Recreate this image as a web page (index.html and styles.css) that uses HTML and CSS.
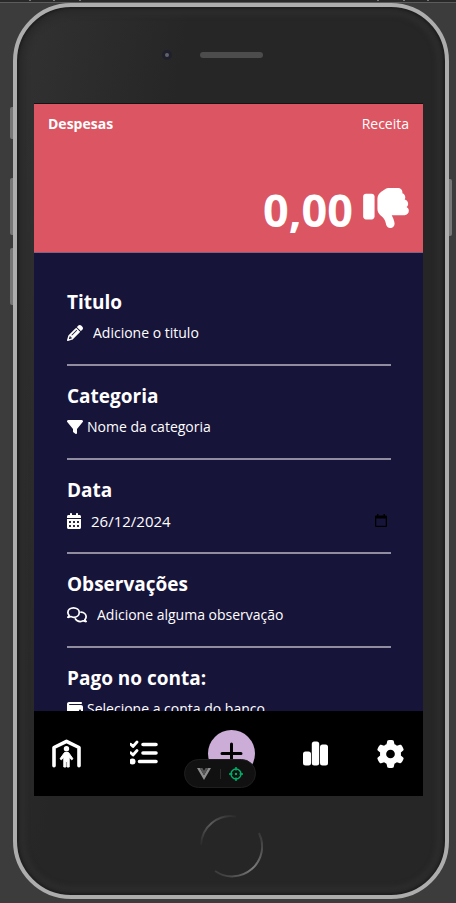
FILE: index.html
```html
<!DOCTYPE html>
<html lang="pt-BR">
<head>
<meta charset="utf-8">
<meta name="viewport" content="width=device-width, initial-scale=1">
<title>Despesas</title>
<link rel="stylesheet" href="styles.css">
</head>
<body>
<div class="stage">
  <svg class="ruler" width="100%" height="3" aria-hidden="true"><path stroke="#777" d="M29 .5h2M53 .5h2M79 .5h2M377 .5h2M403 .5h2M427 .5h2"/></svg>
  <div class="phone">
    <span class="key key-mute"></span>
    <span class="key key-up"></span>
    <span class="key key-down"></span>
    <span class="key key-power"></span>
    <div class="bezel-top">
      <span class="camera"></span>
      <span class="speaker"></span>
    </div>

    <div class="screen">
      <header class="header">
        <div class="tabs">
          <a class="tab tab-active" href="#despesas">Despesas</a>
          <a class="tab" href="#receita">Receita</a>
        </div>
        <div class="amount">
          <span>0,00</span>
          <svg class="thumb" viewBox="0 32 512 448" aria-hidden="true"><path d="M313.4 479.1c26-5.2 42.9-30.5 37.7-56.5l-2.3-11.4c-5.3-26.7-15.1-52.1-28.8-75.2H464c26.5 0 48-21.5 48-48c0-18.5-10.5-34.6-25.9-42.6C497 236.6 504 223.1 504 208c0-23.4-16.8-42.9-38.9-47.1c4.4-7.3 6.9-15.8 6.9-24.9c0-21.3-13.9-39.4-33.1-45.6c.7-3.3 1.1-6.8 1.1-10.4c0-26.5-21.5-48-48-48H294.5c-19 0-37.5 5.6-53.3 16.1L202.7 73.8C176 91.6 160 121.6 160 153.7V192v48 24.9c0 29.2 13.3 56.7 36 75l7.4 5.9c26.5 21.2 44.6 51 51.2 84.2l2.3 11.4c5.2 26 30.5 42.9 56.5 37.7zM32 384H96c17.7 0 32-14.3 32-32V128c0-17.7-14.3-32-32-32H32C14.3 96 0 110.3 0 128V352c0 17.7 14.3 32 32 32z"/></svg>
        </div>
      </header>

      <main class="form">
        <div class="field">
          <label class="label" for="titulo">Titulo</label>
          <div class="row row-wide">
            <svg class="icon" viewBox="0 0 512 512" aria-hidden="true"><path d="M410.3 231l11.3-11.3-33.9-33.9-62.1-62.1L291.7 89.8l-11.3 11.3-22.6 22.6L58.6 322.9c-10.4 10.4-18 23.3-22.2 37.4L1 480.7c-2.5 8.4-.2 17.5 6.1 23.7s15.3 8.5 23.7 6.1l120.3-35.4c14.1-4.2 27-11.8 37.4-22.2L387.7 253.7 410.3 231zM160 399.4l-9.1 22.7c-4 3.1-8.5 5.4-13.3 6.9L59.4 452l23-78.1c1.4-4.9 3.8-9.4 6.9-13.3l22.7-9.1v32c0 8.8 7.2 16 16 16h32zM362.7 18.7L348.3 33.2 325.7 55.8 314.3 67.1l33.9 33.9 62.1 62.1 33.9 33.9 11.3-11.3 22.6-22.6 14.5-14.5c25-25 25-65.5 0-90.5L453.3 18.7c-25-25-65.5-25-90.5 0zm-47.4 168l-144 144c-6.2 6.2-16.4 6.2-22.6 0s-6.2-16.4 0-22.6l144-144c6.2-6.2 16.4-6.2 22.6 0s6.2 16.4 0 22.6z"/></svg>
            <input class="control" id="titulo" type="text" placeholder="Adicione o titulo">
          </div>
        </div>
        <div class="field">
          <label class="label" for="categoria">Categoria</label>
          <div class="row">
            <svg class="icon" viewBox="0 0 512 512" aria-hidden="true"><path d="M3.9 54.9C10.5 40.9 24.5 32 40 32H472c15.5 0 29.5 8.9 36.1 22.9s4.6 30.5-5.2 42.5L320 320.9V448c0 12.1-6.8 23.2-17.7 28.6s-23.8 4.3-33.5-3l-64-48c-8.1-6-12.8-15.5-12.8-25.6V320.9L9 97.3C-.7 85.4-2.8 68.8 3.9 54.9z"/></svg>
            <select class="control" id="categoria"><option>Nome da categoria</option></select>
          </div>
        </div>
        <div class="field">
          <label class="label" for="data">Data</label>
          <div class="row row-wide">
            <svg class="icon icon-narrow" viewBox="0 0 448 512" aria-hidden="true"><path d="M128 0c17.7 0 32 14.3 32 32V64H288V32c0-17.7 14.3-32 32-32s32 14.3 32 32V64h48c26.5 0 48 21.5 48 48v48H0V112C0 85.5 21.5 64 48 64H96V32c0-17.7 14.3-32 32-32zM0 192H448V464c0 26.5-21.5 48-48 48H48c-26.5 0-48-21.5-48-48V192zm64 80v32c0 8.8 7.2 16 16 16h32c8.8 0 16-7.2 16-16V272c0-8.8-7.2-16-16-16H80c-8.8 0-16 7.2-16 16zm128 0v32c0 8.8 7.2 16 16 16h32c8.8 0 16-7.2 16-16V272c0-8.8-7.2-16-16-16H208c-8.8 0-16 7.2-16 16zm144-16c-8.8 0-16 7.2-16 16v32c0 8.8 7.2 16 16 16h32c8.8 0 16-7.2 16-16V272c0-8.8-7.2-16-16-16H336zM64 400v32c0 8.8 7.2 16 16 16h32c8.8 0 16-7.2 16-16V400c0-8.8-7.2-16-16-16H80c-8.8 0-16 7.2-16 16zm144-16c-8.8 0-16 7.2-16 16v32c0 8.8 7.2 16 16 16h32c8.8 0 16-7.2 16-16V400c0-8.8-7.2-16-16-16H208zm112 16v32c0 8.8 7.2 16 16 16h32c8.8 0 16-7.2 16-16V400c0-8.8-7.2-16-16-16H336c-8.8 0-16 7.2-16 16z"/></svg>
            <input class="control control-date" id="data" type="text" inputmode="numeric" value="26/12/2024">
            <button class="picker" type="button" aria-label="Abrir calendário">
              <svg viewBox="0 0 12 14" width="12" height="14" aria-hidden="true"><path fill="#000" fill-rule="evenodd" d="M2 0h1.5v1.5h5V0H10v1.5h1a1 1 0 0 1 1 1V12a1 1 0 0 1-1 1H1a1 1 0 0 1-1-1V2.500a1 1 0 0 1 1-1h1zM1.300 4.500v7.200h9.400V4.500z"/></svg>
            </button>
          </div>
        </div>
        <div class="field">
          <label class="label" for="observacoes">Observações</label>
          <div class="row row-wide">
            <svg class="icon icon-wide" viewBox="0 0 640 512" aria-hidden="true"><path fill="none" stroke="#fff" stroke-width="56" stroke-linejoin="round" stroke-linecap="round" d="M208 28C106 28 28 94 28 176c0 36 15 68 39 94-6 22-20 44-38 58 34 1 66-8 92-22 28 14 58 22 91 22 102 0 180-68 180-152S310 28 208 28zM447 163c96 6 165 72 165 149 0 36-15 68-39 94 6 22 20 44 38 58-34 1-66-8-92-22-28 14-58 22-91 22-72 0-134-34-160-84"/></svg>
            <input class="control" id="observacoes" type="text" placeholder="Adicione alguma observação">
          </div>
        </div>
        <div class="field">
          <label class="label" for="conta">Pago no conta:</label>
          <div class="row">
            <svg class="icon" viewBox="0 0 512 512" aria-hidden="true"><path d="M64 32C28.700 32 0 60.700 0 96V416c0 35.300 28.700 64 64 64H448c35.300 0 64-28.700 64-64V192c0-35.300-28.700-64-64-64H80c-8.800 0-16-7.200-16-16s7.200-16 16-16H448c17.700 0 32-14.300 32-32s-14.300-32-32-32H64zM416 272a32 32 0 1 1 0 64 32 32 0 1 1 0-64z"/></svg>
            <select class="control" id="conta"><option>Selecione a conta do banco</option></select>
          </div>
        </div>
      </main>

      <nav class="nav" aria-label="Principal">
        <a href="#inicio" aria-label="Início">
          <svg width="29" height="29" viewBox="0 0 29 29" aria-hidden="true"><path fill="none" stroke="#fff" stroke-width="3.6" stroke-linecap="round" stroke-linejoin="round" d="M2 26.800V8.500L14.500 2.300 27 8.500v18.300"/><circle cx="14.500" cy="9.700" r="2.700" fill="#fff"/><path fill="#fff" stroke="#fff" stroke-linejoin="round" d="M12.500 13.500h4l4.500 6.300-1.500 1-2.300-2.700V28h-2.100v-5.500h-1.200V28h-2.100v-9.900l-2.300 2.700-1.500-1z"/></svg>
        </a>
        <a href="#lista" aria-label="Lista">
          <svg width="29" height="29" viewBox="1 1 29 29" aria-hidden="true"><path fill="none" stroke="#fff" stroke-width="3.600" stroke-linecap="round" d="M14 6.500H27M14 15H27M10.500 23.500H27"/><path fill="none" stroke="#fff" stroke-width="2.800" stroke-linecap="round" stroke-linejoin="round" d="M1.700 6.300 4 8.500 8 4M1.700 14.800 4 17l4-4.500"/><circle cx="3.500" cy="23.500" r="3" fill="#fff"/></svg>
        </a>
        <a class="add" href="#adicionar" aria-label="Adicionar">
          <svg width="23" height="23" viewBox="0 0 23 23" aria-hidden="true"><path stroke="#000" stroke-width="3" stroke-linecap="round" d="M11.500 2v19M2 11.500h19"/></svg>
        </a>
        <a href="#graficos" aria-label="Gráficos">
          <svg width="25" height="25" viewBox="0 0 25 25" aria-hidden="true"><rect y="10.500" width="8" height="14" rx="2.500"/><rect x="8.800" y=".5" width="7.400" height="24" rx="2.500"/><rect x="17" y="3.500" width="8" height="21" rx="2.500"/></svg>
        </a>
        <a href="#ajustes" aria-label="Ajustes">
          <svg width="27" height="28" viewBox="8 0 496 512" aria-hidden="true"><path d="M495.9 166.6c3.2 8.7 .5 18.4-6.4 24.6l-43.3 39.4c1.100 8.300 1.700 16.800 1.700 25.400s-.6 17.100-1.700 25.400l43.300 39.400c6.900 6.200 9.600 15.900 6.400 24.600c-4.400 11.900-9.700 23.300-15.800 34.300l-4.700 8.100c-6.600 11-14 21.400-22.100 31.200c-5.900 7.200-15.700 9.600-24.500 6.800l-55.700-17.700c-13.400 10.300-28.200 18.900-44 25.400l-12.500 57.100c-2 9.100-9 16.300-18.200 17.800c-13.800 2.300-28 3.500-42.500 3.500s-28.700-1.200-42.500-3.500c-9.200-1.500-16.200-8.700-18.200-17.800l-12.500-57.100c-15.800-6.500-30.600-15.100-44-25.400L83.100 425.900c-8.800 2.800-18.600 .3-24.500-6.800c-8.100-9.800-15.500-20.200-22.100-31.200l-4.700-8.100c-6.100-11-11.400-22.400-15.800-34.300c-3.200-8.700-.5-18.400 6.400-24.600l43.300-39.400C64.600 273.100 64 264.600 64 256s.6-17.100 1.700-25.400L22.400 191.200c-6.900-6.200-9.600-15.900-6.400-24.600c4.400-11.900 9.700-23.300 15.800-34.300l4.700-8.100c6.600-11 14-21.400 22.100-31.200c5.900-7.200 15.700-9.600 24.500-6.800l55.700 17.700c13.400-10.300 28.200-18.900 44-25.400l12.500-57.100c2-9.100 9-16.300 18.200-17.800C227.300 1.200 241.500 0 256 0s28.700 1.200 42.500 3.500c9.200 1.500 16.200 8.700 18.200 17.800l12.500 57.100c15.800 6.500 30.600 15.100 44 25.400l55.700-17.700c8.800-2.800 18.600-.3 24.500 6.800c8.100 9.800 15.500 20.200 22.100 31.200l4.700 8.100c6.100 11 11.400 22.400 15.800 34.300zM256 336a80 80 0 1 0 0-160 80 80 0 1 0 0 160z"/></svg>
        </a>
      </nav>

      <div class="devtools">
        <button type="button" aria-label="Vue DevTools"><svg width="14" height="12" viewBox="0 0 14 12" aria-hidden="true"><path fill="#8c8c8c" d="M0 0h2.800L7 7.200 11.200 0H14L7 12z"/><path fill="#555" d="M2.800 0h2.600L7 2.800 8.600 0h2.600L7 7.200z"/></svg></button>
        <span class="divider"></span>
        <button type="button" aria-label="Inspecionar componente"><svg width="14" height="14" viewBox="0 0 14 14" aria-hidden="true"><g fill="none" stroke="#00b36b" stroke-width="1.400"><circle cx="7" cy="7" r="5"/><path d="M7 0v3.500M7 10.500V14M0 7h3.500M10.500 7H14"/></g><circle cx="7" cy="7" r="1.200" fill="#00b36b"/></svg></button>
      </div>
    </div>

    <div class="bezel-bottom">
      <svg width="64" height="64" viewBox="0 0 64 64" aria-hidden="true">
        <defs>
          <linearGradient id="arc-a" x1="0" y1="1" x2="1" y2="0"><stop offset="0" stop-color="#2a2a2a"/><stop offset=".5" stop-color="#5c5c5c"/><stop offset="1" stop-color="#2a2a2a"/></linearGradient>
          <linearGradient id="arc-b" x1="0" y1="1" x2="1" y2="0"><stop offset="0" stop-color="#333"/><stop offset=".5" stop-color="#7c7c7c"/><stop offset="1" stop-color="#333"/></linearGradient>
        </defs>
        <path fill="none" stroke="url(#arc-a)" stroke-width="2" d="M2 31A30 30 0 0 1 37 2.400"/>
        <path fill="none" stroke="url(#arc-b)" stroke-width="2" d="M60 19A30 30 0 0 1 16 57"/>
      </svg>
    </div>
  </div>
</div>
</body>
</html>
```
FILE: styles.css
```css
* {
  box-sizing: border-box;
}

body {
  margin: 0;
  background: #3c3c3c;
  color: #fff;
  font-family: "Open Sans", "Noto Sans", sans-serif;
  font-size: 14px;
  line-height: 24px;
}

a {
  color: inherit;
  text-decoration: none;
}

svg {
  display: block;
  fill: #fff;
}

button {
  display: flex;
  padding: 0;
  border: 0;
  background: none;
}

.stage {
  display: flex;
  flex-direction: column;
  height: 100vh;
  padding-bottom: 4px;
}

.ruler {
  flex: none;
  background: #292929;
  border-bottom: 1px solid #5c5c5c;
}

.phone {
  position: relative;
  flex: 1;
  min-height: 0;
  display: flex;
  flex-direction: column;
  margin: 0 7px 0 13px;
  padding: 0 22px 0 17px;
  border: 4px solid #adadad;
  border-radius: 58px;
  background: linear-gradient(100deg, #323232, #262626 30%);
  box-shadow: inset 0 0 3px 2px #1d1d1d, inset 0 0 4px 9px #2c2c2c;
}

.key {
  position: absolute;
  left: -7px;
  width: 3px;
  height: 57px;
  border-radius: 2px 0 0 2px;
  background: #777;
}

.key-mute {
  top: 100px;
  height: 32px;
}

.key-up {
  top: 171px;
}

.key-down {
  top: 241px;
}

.key-power {
  top: 172px;
  right: -7px;
  left: auto;
  border-radius: 0 2px 2px 0;
}

.bezel-top {
  flex: none;
  display: flex;
  align-items: center;
  justify-content: center;
  gap: 28px;
  height: 97px;
  padding-right: 32px;
  border-bottom: 1px solid #141414;
}

.camera {
  width: 10px;
  height: 10px;
  border: 3px solid #20202c;
  border-radius: 50%;
  background: #62626c;
}

.speaker {
  width: 63px;
  height: 6px;
  border-radius: 3px;
  background: #4c4c4c;
}

.screen {
  position: relative;
  flex: 1;
  min-height: 0;
  display: flex;
  flex-direction: column;
  background: #17143a;
}

.header {
  flex: none;
  display: flex;
  flex-direction: column;
  gap: 42px;
  padding: 8px 14px 10px;
  border-bottom: 1px solid #84607f;
  background: #dc5562;
}

.tabs {
  display: flex;
  justify-content: space-between;
}

.tab-active {
  font-weight: 700;
}

.amount {
  display: flex;
  justify-content: flex-end;
  gap: 10px;
  font-size: 45px;
  font-weight: 700;
  line-height: 64px;
}

.thumb {
  width: 46px;
  height: 40px;
  margin-top: 10px;
}

.form {
  flex: 1;
  min-height: 0;
  padding: 19px 32px 0 33px;
  overflow-y: auto;
  scrollbar-width: none;
}

.field {
  padding: 16px 0 19px;
  border-bottom: 2px solid #8f8d9f;
}

.label {
  display: block;
  margin-bottom: 5px;
  font-size: 19px;
  font-weight: 700;
  line-height: 28px;
}

.row {
  display: flex;
  align-items: center;
  gap: 4px;
}

.row-wide {
  gap: 10px;
}

.icon {
  flex: none;
  width: 16px;
  height: 16px;
}

.icon-narrow {
  width: 14px;
}

.icon-wide {
  width: 20px;
}

.control {
  appearance: none;
  flex: 1;
  min-width: 0;
  height: 24px;
  padding: 0;
  border: 0;
  background: none;
  color: #fff;
  font: inherit;
}

.control::placeholder {
  color: #fff;
  opacity: 1;
}

.control-date {
  font-size: 15px;
}

.picker {
  padding: 0 4px;
}

.nav {
  flex: none;
  display: flex;
  align-items: center;
  justify-content: space-between;
  height: 85px;
  padding: 0 19px 0 18px;
  background: #000;
}

.add {
  display: flex;
  align-items: center;
  justify-content: center;
  width: 47px;
  height: 47px;
  border-radius: 50%;
  background: #cbadd8;
}

.devtools {
  position: absolute;
  bottom: 8px;
  left: 150px;
  display: flex;
  align-items: center;
  justify-content: space-between;
  width: 72px;
  height: 29px;
  padding: 0 12px;
  border: 1px solid #1f1f1f;
  border-radius: 15px;
  background: #111;
}

.divider {
  width: 1px;
  height: 10px;
  background: #2c2c2c;
}

.bezel-bottom {
  flex: none;
  display: flex;
  align-items: center;
  justify-content: center;
  height: 99px;
  padding-left: 5px;
}
```
